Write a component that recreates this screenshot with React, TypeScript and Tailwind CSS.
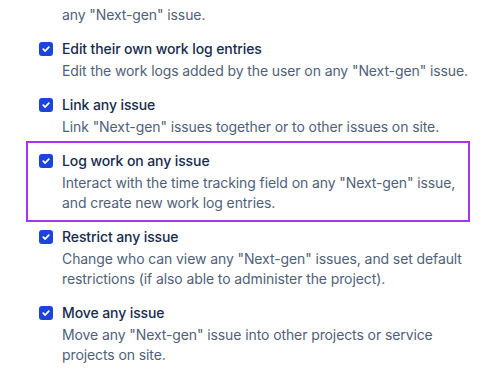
import React from 'react';

type Perm = {
  title: string;
  lines: string[];
  highlight?: boolean;
};

const perms: Perm[] = [
  {
    title: 'Edit their own work log entries',
    lines: ['Edit the work logs added by the user on any "Next-gen" issue.'],
  },
  {
    title: 'Link any issue',
    lines: ['Link "Next-gen" issues together or to other issues on site.'],
  },
  {
    title: 'Log work on any issue',
    lines: ['Interact with the time tracking field on any "Next-gen" issue,', 'and create new work log entries.'],
    highlight: true,
  },
  {
    title: 'Restrict any issue',
    lines: ['Change who can view any "Next-gen" issues, and set default', 'restrictions (if also able to administer the project).'],
  },
  {
    title: 'Move any issue',
    lines: ['Move any "Next-gen" issue into other projects or service', 'projects on site.'],
  },
];

const Check = () => (
  <div className="w-[14px] h-[14px] rounded-[3px] bg-[#1d44d8] flex items-center justify-center shrink-0">
    <svg width="10" height="10" viewBox="0 0 10 10" fill="none">
      <path d="M2.3 5.2 L4.2 7 L7.8 3.2" stroke="white" strokeWidth="1.8" strokeLinecap="round" strokeLinejoin="round" />
    </svg>
  </div>
);

const Row: React.FC<{ p: Perm }> = ({ p }) => (
  <div className="relative flex">
    {p.highlight && (
      <div className="absolute -top-[10px] -bottom-[9px] -left-[13px] right-0 border-2 border-[#a633f5]" />
    )}
    <div className="w-[23px] shrink-0 pt-[3px]">
      <Check />
    </div>
    <div className="flex flex-col gap-[2px]">
      <div className="text-[14px] leading-[20px] font-medium text-[#172b4d] whitespace-nowrap">{p.title}</div>
      <div className="text-[14px] leading-[20px] text-[#505f79] whitespace-nowrap">
        {p.lines.map((l, i) => (
          <div key={i}>{l}</div>
        ))}
      </div>
    </div>
  </div>
);

const App: React.FC = () => {
  return (
    <div className="w-[502px] h-[380px] overflow-hidden bg-white" style={{ fontFamily: 'Inter, "Noto Sans", sans-serif' }}>
      <div className="pl-[39px] pr-[32px] pt-[5px] flex flex-col gap-[14px] tracking-[-0.1px]">
        <div className="pl-[23px] text-[14px] leading-[20px] text-[#505f79] whitespace-nowrap">any "Next-gen" issue.</div>
        {perms.map((p, i) => (
          <Row key={i} p={p} />
        ))}
      </div>
    </div>
  );
};

export default App;
